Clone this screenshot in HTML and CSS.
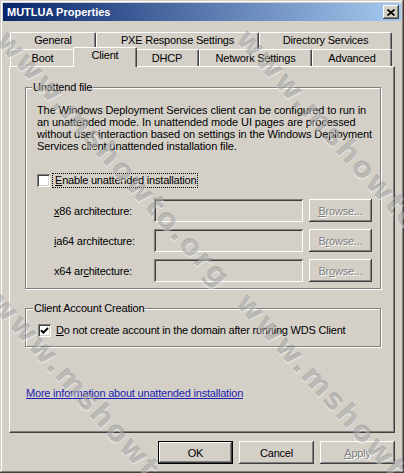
FILE: index.html
```html
<!DOCTYPE html>
<html lang="en">
<head>
    <meta charset="UTF-8">
    <title>MUTLUA Properties</title>
    <link rel="stylesheet" href="styles.css">
</head>
<body>
    <div class="window">
        <div class="titlebar">
            <span class="title">MUTLUA Properties</span>
            <span class="close-btn">
                <svg width="8" height="7" viewBox="0 0 8 7"><path d="M0.5 0.5l7 6M7.5 0.5l-7 6" stroke="#000" stroke-width="1.7"/></svg>
            </span>
        </div>
        <div class="body">
            <div class="tabs">
                <div class="tab-row">
                    <div class="tab t-general">General</div>
                    <div class="tab t-pxe">PXE Response Settings</div>
                    <div class="tab t-dir">Directory Services</div>
                </div>
                <div class="tab-row front">
                    <div class="tab t-boot">Boot</div>
                    <div class="tab t-client active">Client</div>
                    <div class="tab t-dhcp">DHCP</div>
                    <div class="tab t-net">Network Settings</div>
                    <div class="tab t-adv">Advanced</div>
                </div>
            </div>
            <div class="panel">
                <fieldset class="group unattend">
                    <legend>Unattend file</legend>
                    <p class="desc">The Windows Deployment Services client can be configured to run in<br>an unattended mode. In unattended mode UI pages are processed<br>without user interaction based on settings in the Windows Deployment<br>Services client unattended installation file.</p>
                    <div class="check-row">
                        <span class="checkbox"></span>
                        <span class="check-label focused"><u>E</u>nable unattended installation</span>
                    </div>
                    <div class="arch-grid">
                        <span class="arch-label"><u>x</u>86 architecture:</span>
                        <span class="field"></span>
                        <span class="btn disabled"><u>B</u>rowse...</span>
                        <span class="arch-label"><u>i</u>a64 architecture:</span>
                        <span class="field"></span>
                        <span class="btn disabled">B<u>r</u>owse...</span>
                        <span class="arch-label">x64 ar<u>c</u>hitecture:</span>
                        <span class="field"></span>
                        <span class="btn disabled">Br<u>o</u>wse...</span>
                    </div>
                </fieldset>
                <fieldset class="group account">
                    <legend>Client Account Creation</legend>
                    <div class="check-row">
                        <span class="checkbox checked">
                            <svg width="9" height="9" viewBox="0 0 9 9"><path d="M1 4.2l2.4 2.4L8 2" fill="none" stroke="#000" stroke-width="2"/></svg>
                        </span>
                        <span class="check-label"><u>D</u>o not create account in the domain after running WDS Client</span>
                    </div>
                </fieldset>
                <a class="more-link" href="#">More information about unattended installation</a>
            </div>
            <div class="buttons">
                <span class="btn default">OK</span>
                <span class="btn">Cancel</span>
                <span class="btn disabled"><u>A</u>pply</span>
            </div>
        </div>
        <div class="watermark">
            <span class="wm wm1">www.mshowto.org</span>
            <span class="wm wm2">www.mshowto.org</span>
            <span class="wm wm3">www.mshowto.org</span>
            <span class="wm wm4">www.mshowto.org</span>
        </div>
    </div>
</body>
</html>
```

FILE: styles.css
```css
body {
    margin: 0;
    font-family: "Liberation Sans", Arial, sans-serif;
    font-size: 11px;
    letter-spacing: -0.2px;
    color: #000;
}
.window {
    position: relative;
    width: 404px;
    height: 473px;
    box-sizing: border-box;
    padding: 3px;
    background-color: #d4d0c8;
    box-shadow: inset -1px -1px #404040, inset 1px 1px #d4d0c8, inset -2px -2px #808080, inset 2px 2px #fff;
    overflow: hidden;
}
.titlebar {
    height: 18px;
    display: flex;
    align-items: center;
    justify-content: space-between;
    padding: 0 2px 0 4px;
    background: linear-gradient(to right, #0a246a, #a6caf0);
}
.title {
    color: #fff;
    font-weight: bold;
    font-size: 11px;
    letter-spacing: 0;
}
.close-btn {
    width: 16px;
    height: 14px;
    display: flex;
    align-items: center;
    justify-content: center;
    background-color: #d4d0c8;
    box-shadow: inset -1px -1px #404040, inset 1px 1px #fff, inset -2px -2px #808080, inset 2px 2px #d4d0c8;
}
.body {
    padding: 11px 6px 0 6px;
}
.tabs {
    padding: 0 3px 0 1px;
}
.tab-row {
    display: flex;
    height: 17px;
}
.tab-row.front {
    align-items: flex-end;
}
.tab {
    height: 17px;
    box-sizing: border-box;
    border-top: 1px solid #fff;
    border-left: 1px solid #fff;
    border-right: 1px solid #404040;
    box-shadow: inset -1px 0 #808080;
    border-radius: 2px 2px 0 0;
    text-align: center;
    line-height: 15px;
    background-color: #d4d0c8;
    white-space: nowrap;
}
.front .tab {
    line-height: 17px;
}
.t-general { width: 86px; }
.t-pxe { width: 163px; }
.t-dir { width: 133px; }
.t-boot { width: 65px; }
.t-client { width: 64px; }
.t-dhcp { width: 64px; }
.t-net { width: 113px; }
.t-adv { width: 80px; }
.tab.active {
    position: relative;
    z-index: 1;
    height: 20px;
    margin: 0 -2px -1px;
    line-height: 15px;
}
.panel {
    height: 367px;
    box-sizing: border-box;
    border-top: 1px solid #fff;
    border-left: 1px solid #fff;
    border-right: 1px solid #404040;
    border-bottom: 1px solid #404040;
    box-shadow: inset -1px -1px #808080;
    padding: 14px 13px 0 15px;
}
.group {
    margin: 0;
    padding: 0 11px 6px;
    border: 1px solid #808080;
    box-shadow: inset 1px 1px #fff, 1px 1px #fff;
    min-inline-size: 0;
}
.group legend {
    margin-left: -5px;
    padding: 0 1px;
    line-height: 13px;
    background-color: #d4d0c8;
}
.desc {
    margin: 10px 0 0;
    line-height: 12px;
    letter-spacing: -0.1px;
    white-space: nowrap;
}
.check-row {
    display: flex;
    align-items: center;
    height: 14px;
    margin-top: 21px;
}
.checkbox {
    width: 13px;
    height: 13px;
    flex: none;
    display: flex;
    align-items: center;
    justify-content: center;
    background-color: #fff;
    box-shadow: inset 1px 1px #808080, inset -1px -1px #fff, inset 2px 2px #404040, inset -2px -2px #d4d0c8;
}
.check-label {
    margin-left: 3px;
    padding: 0 1px 0 2px;
    line-height: 13px;
}
.check-label.focused {
    outline: 1px dotted #000;
    outline-offset: 0;
}
.arch-grid {
    display: grid;
    grid-template-columns: 94px 149px 63px;
    grid-auto-rows: 23px;
    column-gap: 6px;
    row-gap: 7px;
    margin: 12px 0 0 17px;
    align-items: center;
}
.field {
    height: 23px;
    box-sizing: border-box;
    background-color: #d4d0c8;
    box-shadow: inset 1px 1px #808080, inset -1px -1px #fff, inset 2px 2px #404040, inset -2px -2px #d4d0c8;
}
.btn {
    display: flex;
    align-items: center;
    justify-content: center;
    height: 23px;
    box-sizing: border-box;
    background-color: #d4d0c8;
    box-shadow: inset -1px -1px #404040, inset 1px 1px #fff, inset -2px -2px #808080, inset 2px 2px #d4d0c8;
}
.btn.disabled {
    color: #808080;
    text-shadow: 1px 1px 0 #fff;
}
.group.account {
    margin-top: 13px;
    padding: 0 12px 9px;
}
.account .check-row {
    margin-top: 8px;
}
.more-link {
    display: inline-block;
    margin: 40px 0 0 1px;
    color: #1c1cb0;
    text-decoration: underline;
    line-height: 13px;
}
.buttons {
    display: flex;
    justify-content: flex-end;
    gap: 6px;
    margin-top: 8px;
}
.buttons .btn {
    width: 75px;
}
.btn.default {
    border: 1px solid #000;
}
.watermark {
    position: absolute;
    inset: 0;
    overflow: hidden;
    pointer-events: none;
}
.wm {
    position: absolute;
    transform-origin: 0 50%;
    transform: rotate(48deg);
    font-family: "DejaVu Sans", sans-serif;
    font-weight: bold;
    font-size: 29px;
    letter-spacing: 2px;
    white-space: nowrap;
    color: rgba(60, 60, 60, 0.25);
    text-shadow: 1px 1px 0 rgba(255, 255, 255, 0.45);
}
.wm1 { left: 2px; top: 18px; }
.wm2 { left: 242px; top: 16px; }
.wm3 { left: -4px; top: 280px; }
.wm4 { left: 242px; top: 280px; }
```
